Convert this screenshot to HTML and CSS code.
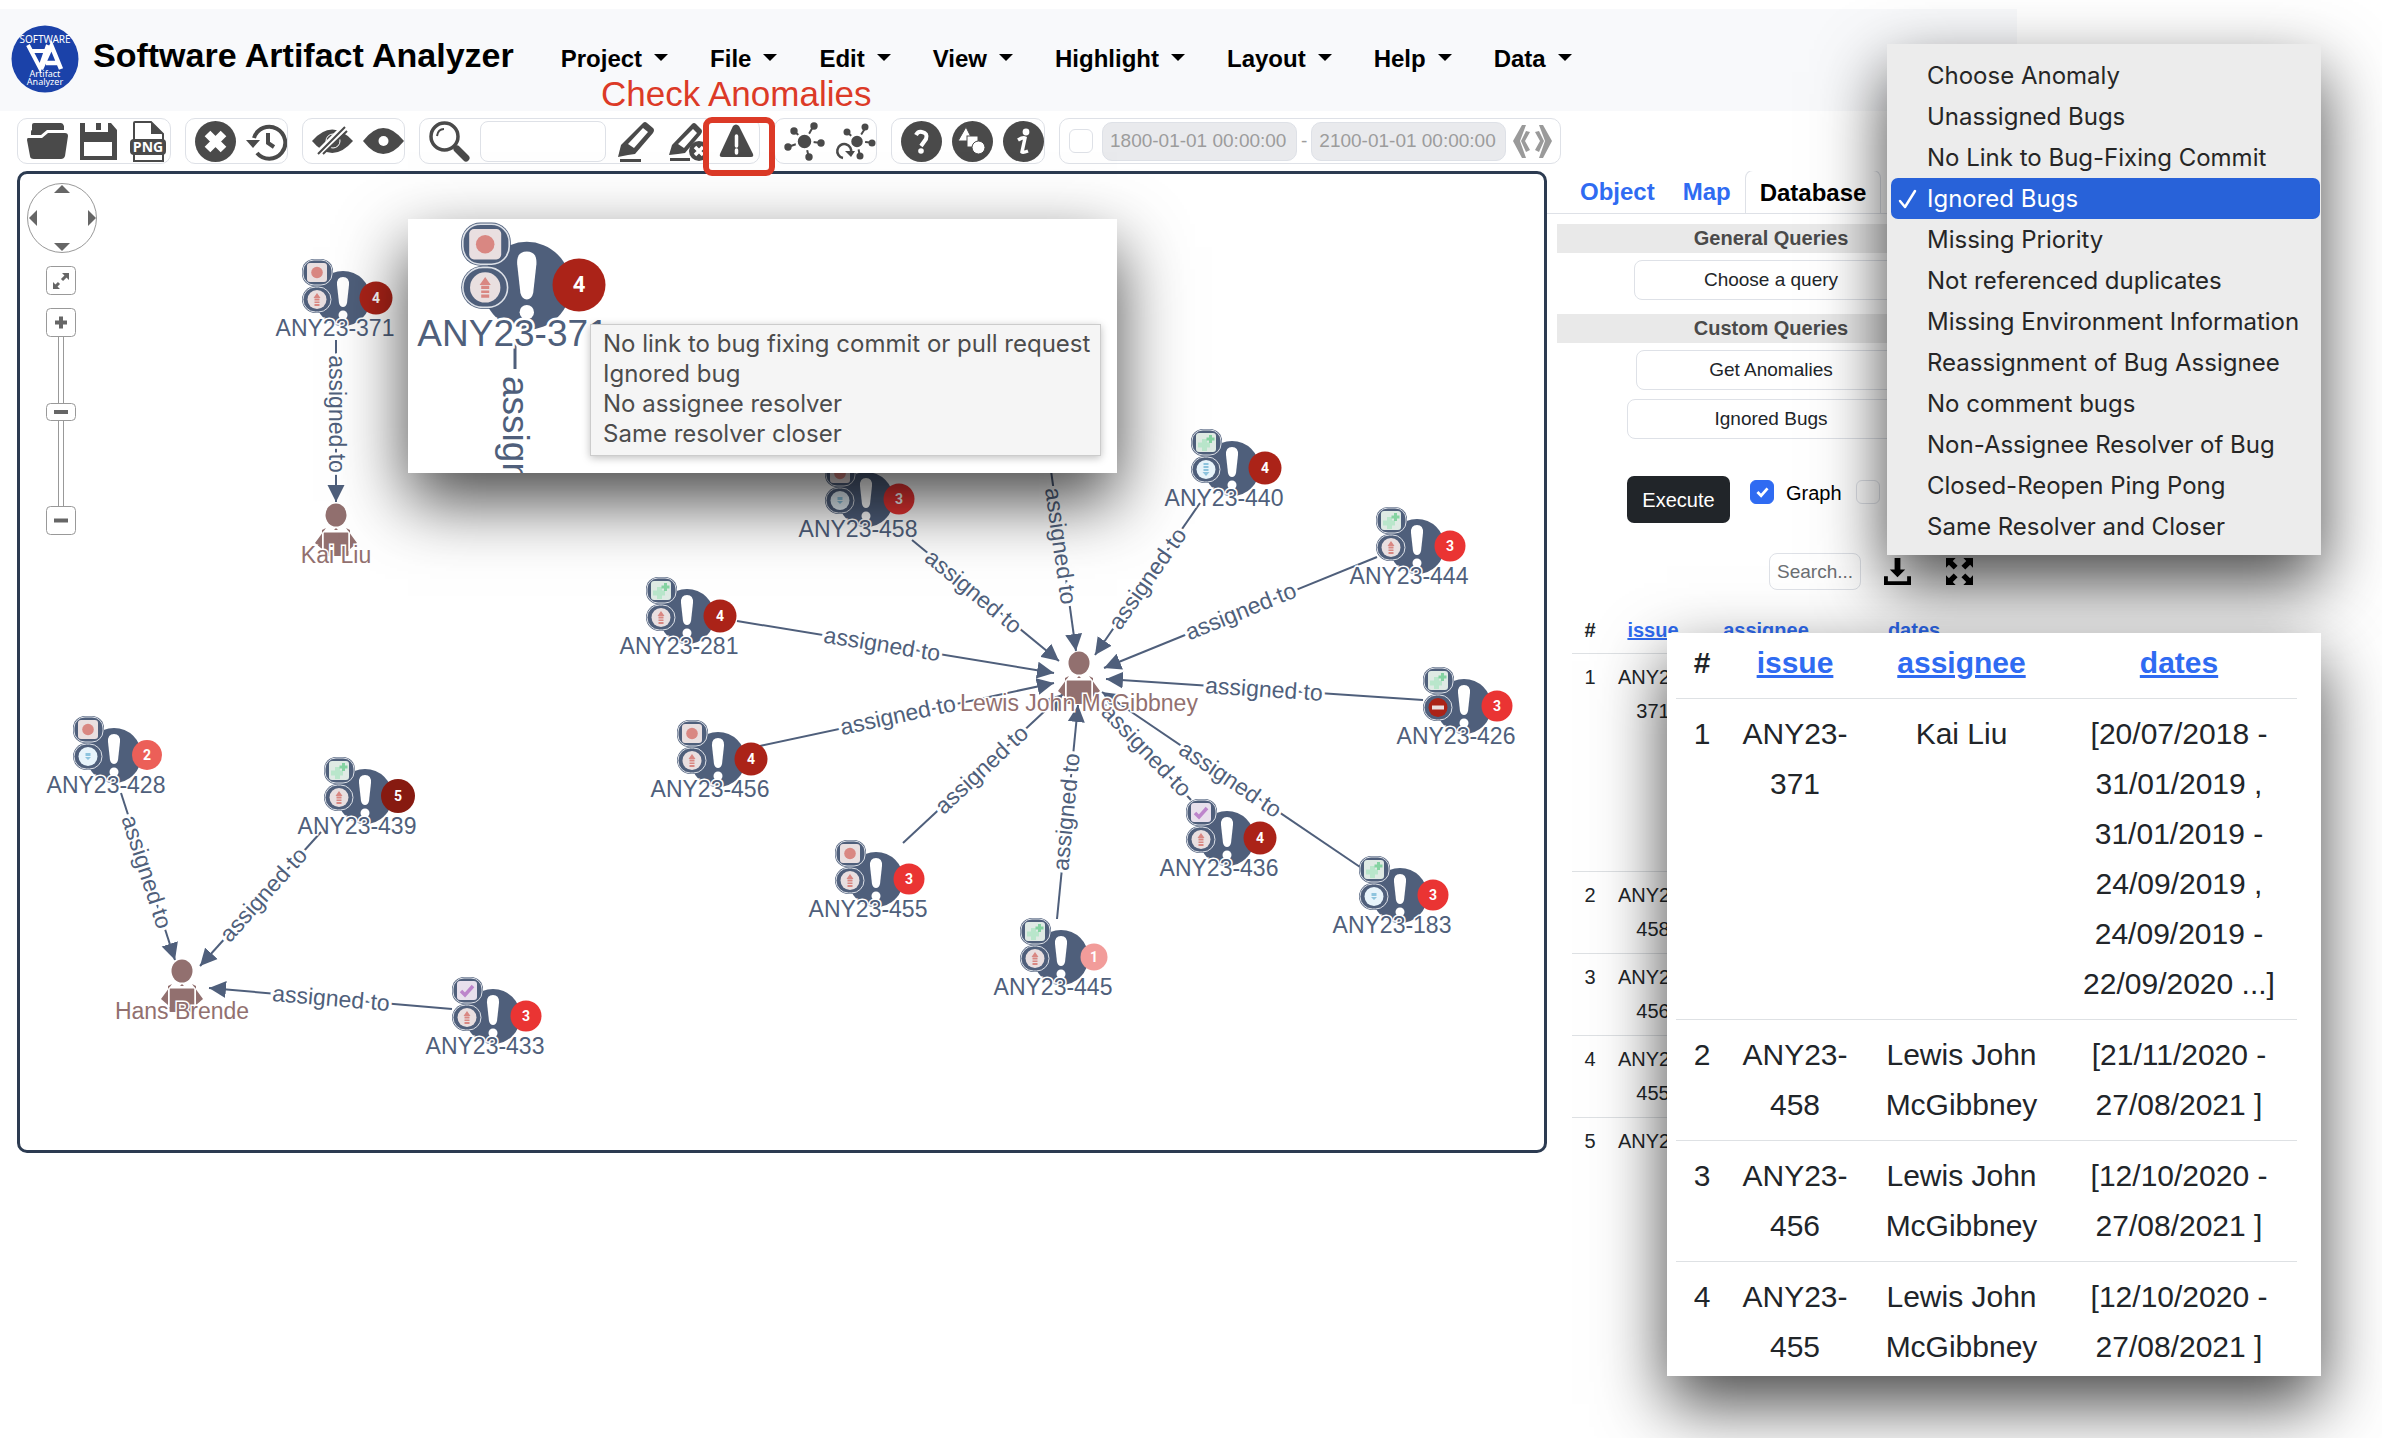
FILE: index.html
```html
<!DOCTYPE html>
<html lang="en">
<head>
<meta charset="utf-8">
<title>Software Artifact Analyzer</title>
<link rel="stylesheet" href="styles.css">
</head>
<body>
<div class="app">
  <header class="navbar">
    <svg class="logo" viewBox="0 0 68 68" aria-hidden="true">
      <circle cx="34" cy="34" r="33.500" fill="#1b42a9"/>
      <text x="34" y="18" font-size="10" text-anchor="middle" fill="#fff">SOFTWARE</text>
      <path d="M17 20L29 43L37 20M21 26H34" fill="none" stroke="#fff" stroke-width="4"/>
      <path d="M30 44L40.500 21L50 44M35 38H46" fill="none" stroke="#fff" stroke-width="4.500"/>
      <text x="34" y="52" font-size="9" text-anchor="middle" fill="#fff">Artifact</text>
      <text x="34" y="60" font-size="9" text-anchor="middle" fill="#fff">Analyzer</text>
    </svg>
    <h1 class="brand">Software Artifact Analyzer</h1>
    <nav class="menu">
      <button>Project</button><button>File</button><button>Edit</button><button>View</button><button>Highlight</button><button>Layout</button><button>Help</button><button>Data</button>
    </nav>
  </header>

  <div class="toolbar">
    <div class="group">
      <button aria-label="Open"><svg viewBox="0 0 41 41"><path d="M5 9V4Q5 2 7 2H34Q36 2 37 5V9H20L14 14H4V11Q4 9 5 9Z"/><path d="M1 17H15L21 12H38Q41 12 41 15L38 35Q37 38 34 38H7Q3 38 3 35L0 19Q0 17 1 17Z"/></svg></button>
      <button aria-label="Save"><svg viewBox="0 0 41 41"><path fill-rule="evenodd" d="M2 2H7V11H30V2H33L39 9V39H2ZM6 21V35H34V21Z"/><path d="M18 2H23V9H18Z"/></svg></button>
      <button aria-label="Save as PNG"><svg viewBox="0 0 41 41"><path d="M5 20V2Q5 1 6 1H22L34 13V20M5 32V40H34V32" fill="none" stroke="#4a4a4a" stroke-width="2"/><path d="M22 1L34 13H22Z"/><rect x="1" y="18" width="36" height="16" rx="4"/><text x="19" y="31" font-size="14" font-weight="700" text-anchor="middle" fill="#fff" class="png">PNG</text></svg></button>
    </div>
    <div class="group">
      <button aria-label="Clear"><svg viewBox="0 0 41 41"><circle cx="20.500" cy="20.500" r="20.500"/><path d="M12.500 12.500L28.500 28.500M28.500 12.500L12.500 28.500" stroke="#fff" stroke-width="8"/></svg></button>
      <button aria-label="History"><svg viewBox="0 0 41 41"><path d="M8 17A16 16 0 1 1 11 32" fill="none" stroke="#4a4a4a" stroke-width="4"/><path d="M0 19H14L7 27Z"/><path d="M22 12V22L28 26" fill="none" stroke="#4a4a4a" stroke-width="4"/></svg></button>
    </div>
    <div class="group">
      <button aria-label="Hide"><svg viewBox="0 0 41 41"><path d="M0 20Q20 -3 41 20Q20 44 0 20Z"/><circle cx="21" cy="20" r="7" fill="none" stroke="#fff"/><path d="M6 33L33 6" stroke="#fff" stroke-width="7"/><path d="M6 33L33 6M11 33L35 10" stroke="#4a4a4a" stroke-width="2"/></svg></button>
      <button aria-label="Show"><svg viewBox="0 0 41 41"><path d="M0 20Q20 -6 41 20Q20 46 0 20Z"/><circle cx="20.500" cy="20" r="5" fill="#fff"/></svg></button>
    </div>
    <div class="group">
      <button aria-label="Search"><svg viewBox="0 0 41 41"><circle cx="15.500" cy="15.500" r="13.500" fill="none" stroke="#4a4a4a" stroke-width="3.500"/><path d="M8 15Q9 8 15 8" fill="none" stroke="#4a4a4a" stroke-width="2"/><path d="M28 28L37 37" stroke="#4a4a4a" stroke-width="7" stroke-linecap="round"/></svg></button>
      <input class="find" type="text" aria-label="Search text">
      <button aria-label="Highlight"><svg viewBox="0 0 41 41"><path fill-rule="evenodd" d="M2 36L5 24L27 2Q29 0 31 2L37 7Q39 9 37 12L19 33L12 34ZM12 23L27 7L32 11L18 27Z"/><path d="M4 38H25V41H4Z"/></svg></button>
      <button aria-label="Remove highlights"><svg viewBox="0 0 41 41"><path fill-rule="evenodd" d="M2 34L5 24L25 3Q27 1 29 3L34 8Q36 10 34 13L18 32L11 33ZM11 23L26 8L30 12L17 27Z"/><path d="M3 37H23V40H3Z"/><circle cx="32" cy="30" r="10"/><path d="M28 26L36 34M36 26L28 34" stroke="#fff" stroke-width="3.500"/></svg></button>
      <div class="marked">
        <button aria-label="Check anomalies"><svg viewBox="0 0 41 41"><path d="M15 5Q18 2 21 5L35 33Q36 36 33 36H4Q1 36 2 33Z"/><path d="M18.500 15V25M18.500 29V32" stroke="#fff" stroke-width="3.500" stroke-linecap="round"/></svg></button>
        <span class="marker-box"></span>
        <span class="marker-text">Check Anomalies</span>
      </div>
    </div>
    <div class="group">
      <button aria-label="Layout"><svg viewBox="0 0 41 41"><path d="M21 20L10 10M21 20L30 4M21 20L37 22M21 20L4 26M21 20L25 37" stroke="#4a4a4a" stroke-width="2"/><circle cx="20.500" cy="20.500" r="8" stroke="#fff" stroke-width="2.500"/><circle cx="10" cy="10" r="3.700"/><circle cx="30" cy="5" r="3.700"/><circle cx="37" cy="22" r="3.700"/><circle cx="4" cy="26" r="3.700"/><circle cx="25" cy="36" r="3.700"/></svg></button>
      <button aria-label="Recalculate layout"><svg viewBox="0 0 41 41"><path d="M22 20L12 11M22 20L31 6M22 20L39 22M22 20L25 36" stroke="#4a4a4a" stroke-width="2"/><circle cx="22" cy="20.500" r="7" stroke="#fff" stroke-width="2.500"/><circle cx="12" cy="11" r="3.500"/><circle cx="30" cy="6" r="3.500"/><circle cx="37" cy="22" r="3.500"/><circle cx="25" cy="35" r="3.500"/><path d="M8 37A7 7 0 1 1 16 32" fill="none" stroke="#4a4a4a" stroke-width="2.500"/><path d="M10 30H20L16 36Z"/></svg></button>
    </div>
    <div class="group">
      <button aria-label="Help"><svg viewBox="0 0 41 41"><circle cx="20.500" cy="20.500" r="20.500"/><path d="M15 14Q17 10 21 11Q27 12 25 18L20 25" fill="none" stroke="#fff" stroke-width="4"/><circle cx="20" cy="30" r="2.800" fill="#fff"/></svg></button>
      <button aria-label="Legend"><svg viewBox="0 0 41 41"><circle cx="20.500" cy="20.500" r="20.500"/><g fill="#fff" stroke="#4a4a4a"><path d="M14 6L21 20H6Z"/><rect x="15" y="15" width="11" height="11"/><circle cx="26.500" cy="26.500" r="6.500"/></g></svg></button>
      <button aria-label="About"><svg viewBox="0 0 41 41"><circle cx="20.500" cy="20.500" r="20.500"/><circle cx="23" cy="11" r="3.400" fill="#fff"/><path d="M15 19Q20 16 22 17L19 31Q20 32 25 30" fill="none" stroke="#fff" stroke-width="3.500"/></svg></button>
    </div>
    <div class="group dates">
      <input type="checkbox" aria-label="Filter by time">
      <div class="range">
        <input type="text" disabled value="1800-01-01 00:00:00" aria-label="From">
        <span>-</span>
        <input type="text" disabled value="2100-01-01 00:00:00" aria-label="To">
      </div>
      <button aria-label="Step"><svg viewBox="0 0 41 41"><g fill="#9a9a9a"><path d="M10 4H14L8 20L14 37H10L1 20Z"/><path d="M14 10L18 11L13 20L18 29L14 31L9 20Z"/><path d="M31 4H27L33 20L27 37H31L40 20Z"/><path d="M27 10L23 11L28 20L23 29L27 31L32 20Z"/></g></svg></button>
    </div>
  </div>

  <main class="workspace">
    <section class="canvas">
      <svg class="graph" viewBox="20 174 1524 976" role="img" aria-label="Issue graph">
        <defs>
          <marker id="arrow" viewBox="0 0 18 18" refX="17" refY="9" markerWidth="18" markerHeight="18" markerUnits="userSpaceOnUse" orient="auto"><path d="M0 0.500L17 9L0 17.500Z" fill="#4f5f7b"/></marker>
          <g id="issue">
            <circle cx="8" cy="0.500" r="27.500" fill="#4f5f7b"/>
            <path d="M8 -21Q14.500 -21 14 -13L12 5Q11 9 8 9Q5 9 4 5L2 -13Q1.500 -21 8 -21Z" fill="#fff"/>
            <circle cx="8" cy="17" r="4.500" fill="#fff"/>
            <rect x="-33" y="-39" width="31" height="27" rx="12" fill="#4f5f7b"/>
            <rect x="-32" y="-38" width="29" height="25" rx="11" fill="none" stroke="#dde1e8" stroke-width="1"/>
            <rect x="-33" y="-12" width="30" height="27" rx="13.500" fill="#4f5f7b"/>
            <rect x="-32" y="-11" width="28" height="25" rx="12.500" fill="none" stroke="#dde1e8" stroke-width="1"/>
          </g>
          <g id="bug"><rect x="-28" y="-35" width="20" height="19" rx="3" fill="#e9dfe0"/><circle cx="-18" cy="-25.500" r="5.800" fill="#d98782"/></g>
          <g id="feature"><rect x="-28" y="-35" width="20" height="19" rx="3" fill="#dfeae4"/><path d="M-19.500 -29V-17M-26 -23H-14" stroke="#b9e6cb" stroke-width="5"/><path d="M-13.500 -33V-25M-17.500 -29H-9.500" stroke="#85d3a2" stroke-width="3"/></g>
          <g id="task"><rect x="-28" y="-35" width="20" height="19" rx="3" fill="#e8e0ec"/><path d="M-24 -25L-20 -21L-12 -30" fill="none" stroke="#bd85cb" stroke-width="3.500"/></g>
          <g id="major"><circle cx="-18" cy="1.500" r="9.500" fill="#e9dfe0"/><path d="M-21.500 0L-18 -5L-14.500 0ZM-20.500 0.500H-15.500V2.500H-20.500ZM-20.500 3.500H-15.500V5H-20.500ZM-20.500 6H-15.500V8H-20.500Z" fill="#d98782"/></g>
          <g id="minor"><circle cx="-18" cy="1.500" r="9.500" fill="#e8f4fb"/><path d="M-21 2H-15L-18 5ZM-20.500 -2H-15.500V1H-20.500Z" fill="#8ec4de"/></g>
          <g id="trivial"><circle cx="-18" cy="1.500" r="9.500" fill="#e8f4fb"/><path d="M-21.500 4H-14.500L-18 8ZM-20.500 -5H-15.500V-3H-20.500ZM-20.500 -2H-15.500V0H-20.500ZM-20.500 1H-15.500V3H-20.500Z" fill="#8ec4de"/></g>
          <g id="blocker"><circle cx="-18" cy="1.500" r="9.500" fill="#ab2318"/><rect x="-24" y="-0.500" width="12" height="4" fill="#e9dfe0"/></g>
          <g id="person" fill="#92706f">
            <ellipse cx="0" cy="0" rx="10.500" ry="11.500"/>
            <path d="M-10 13L-21 28L-14 34V15ZM10 13L21 28L14 34V15Z"/>
            <path d="M-2 15L0 13L2 15Z"/>
            <rect x="-12.500" y="17" width="25" height="24" rx="1"/>
            <path d="M-13 36V17H13V36" fill="none" stroke="#fff"/>
          </g>
        </defs>

        <g class="edges">
          <path d="M336 340V502"/>
          <path d="M912 540L1059 661"/>
          <path d="M1044 420L1076 651"/>
          <path d="M737 621L1054 673"/>
          <path d="M760 746L1054 683"/>
          <path d="M903 843L1063 694"/>
          <path d="M1057 919L1078 705"/>
          <path d="M1200 503L1095 655"/>
          <path d="M1377 557L1104 668"/>
          <path d="M1423 700L1106 679"/>
          <path d="M1360 867L1102 692"/>
          <path d="M1191 800L1102 703"/>
          <path d="M121 793L175 960"/>
          <path d="M321 832L200 966"/>
          <path d="M452 1009L209 988"/>
        </g>
        <g class="edge-labels">
          <text transform="translate(336 414) rotate(90)" dy="7">assigned to</text>
          <text transform="translate(973 592) rotate(39.500)" dy="7">assigned to</text>
          <text transform="translate(1060 546) rotate(82)" dy="7">assigned to</text>
          <text transform="translate(882 645) rotate(9.300)" dy="7">assigned to</text>
          <text transform="translate(898 716) rotate(-12.100)" dy="7">assigned to</text>
          <text transform="translate(982 770) rotate(-43)" dy="7">assigned to</text>
          <text transform="translate(1067 812) rotate(-84.400)" dy="7">assigned to</text>
          <text transform="translate(1148 579) rotate(-55)" dy="7">assigned to</text>
          <text transform="translate(1241 612) rotate(-22.100)" dy="7">assigned to</text>
          <text transform="translate(1264 690) rotate(3.800)" dy="7">assigned to</text>
          <text transform="translate(1230 780) rotate(34)" dy="7">assigned to</text>
          <text transform="translate(1146 751) rotate(46)" dy="7">assigned to</text>
          <text transform="translate(146 872) rotate(72)" dy="7">assigned to</text>
          <text transform="translate(264 895) rotate(-48)" dy="7">assigned to</text>
          <text transform="translate(331 999) rotate(4.900)" dy="7">assigned to</text>
        </g>

        <g class="nodes">
          <g transform="translate(335 298)"><use href="#issue"/><use href="#bug"/><use href="#major"/><circle class="n4" cx="41" r="16.500"/><text class="count" x="41" y="5">4</text><text class="label" y="38">ANY23-371</text></g>
          <g transform="translate(858 499)"><use href="#issue"/><use href="#bug"/><use href="#minor"/><circle class="n3" cx="41" r="15.500"/><text class="count" x="41" y="5">3</text><text class="label" y="38">ANY23-458</text></g>
          <g transform="translate(679 616)"><use href="#issue"/><use href="#feature"/><use href="#major"/><circle class="n4" cx="41" r="16.500"/><text class="count" x="41" y="5">4</text><text class="label" y="38">ANY23-281</text></g>
          <g transform="translate(710 759)"><use href="#issue"/><use href="#bug"/><use href="#major"/><circle class="n4" cx="41" r="16.500"/><text class="count" x="41" y="5">4</text><text class="label" y="38">ANY23-456</text></g>
          <g transform="translate(868 879)"><use href="#issue"/><use href="#bug"/><use href="#major"/><circle class="n3" cx="41" r="15.500"/><text class="count" x="41" y="5">3</text><text class="label" y="38">ANY23-455</text></g>
          <g transform="translate(1053 957)"><use href="#issue"/><use href="#feature"/><use href="#major"/><circle class="n1" cx="41" r="13.500"/><text class="count" x="41" y="5">1</text><text class="label" y="38">ANY23-445</text></g>
          <g transform="translate(1224 468)"><use href="#issue"/><use href="#feature"/><use href="#trivial"/><circle class="n4" cx="41" r="16.500"/><text class="count" x="41" y="5">4</text><text class="label" y="38">ANY23-440</text></g>
          <g transform="translate(1409 546)"><use href="#issue"/><use href="#feature"/><use href="#major"/><circle class="n3" cx="41" r="15.500"/><text class="count" x="41" y="5">3</text><text class="label" y="38">ANY23-444</text></g>
          <g transform="translate(1456 706)"><use href="#issue"/><use href="#feature"/><use href="#blocker"/><circle class="n3" cx="41" r="15.500"/><text class="count" x="41" y="5">3</text><text class="label" y="38">ANY23-426</text></g>
          <g transform="translate(1219 838)"><use href="#issue"/><use href="#task"/><use href="#major"/><circle class="n4" cx="41" r="16.500"/><text class="count" x="41" y="5">4</text><text class="label" y="38">ANY23-436</text></g>
          <g transform="translate(1392 895)"><use href="#issue"/><use href="#feature"/><use href="#minor"/><circle class="n3" cx="41" r="15.500"/><text class="count" x="41" y="5">3</text><text class="label" y="38">ANY23-183</text></g>
          <g transform="translate(106 755)"><use href="#issue"/><use href="#bug"/><use href="#minor"/><circle class="n2" cx="41" r="15"/><text class="count" x="41" y="5">2</text><text class="label" y="38">ANY23-428</text></g>
          <g transform="translate(357 796)"><use href="#issue"/><use href="#feature"/><use href="#major"/><circle class="n5" cx="41" r="17"/><text class="count" x="41" y="5">5</text><text class="label" y="38">ANY23-439</text></g>
          <g transform="translate(485 1016)"><use href="#issue"/><use href="#task"/><use href="#major"/><circle class="n3" cx="41" r="15.500"/><text class="count" x="41" y="5">3</text><text class="label" y="38">ANY23-433</text></g>
          <g transform="translate(336 515)"><use href="#person"/><text class="label who" y="48">Kai Liu</text></g>
          <g transform="translate(182 971)"><use href="#person"/><text class="label who" y="48">Hans Brende</text></g>
          <g transform="translate(1079 663)"><use href="#person"/><text class="label who" y="48">Lewis John McGibbney</text></g>
        </g>

        <g class="panzoom">
          <circle cx="62" cy="218" r="34.500"/>
          <path class="solid" d="M62 185L70 193H54ZM62 251L70 243H54ZM29 218L37 210V226ZM96 218L88 210V226Z"/>
          <rect x="46.500" y="266.500" width="29" height="28" rx="4"/>
          <path class="solid" d="M69 273V280L62 273ZM53 289V282L60 289Z"/><path class="thick" d="M67 275L62 280M55 287L59 283"/>
          <rect x="46.500" y="308.500" width="29" height="28" rx="4"/>
          <path class="bar" d="M55 322.500H67M61 316.500V328.500"/>
          <path d="M58.500 337V506M63.500 337V506"/>
          <rect x="46.500" y="403.500" width="29" height="17" rx="4"/>
          <path class="bar" d="M54 412H68"/>
          <rect x="46.500" y="506.500" width="29" height="28" rx="4"/>
          <path class="bar" d="M54 520.500H68"/>
        </g>
      </svg>
    </section>

    <aside class="panel">
      <div class="tabs"><a href="#object">Object</a><a href="#map">Map</a><a href="#database" class="active">Database</a></div>
      <div class="panel-body">
        <h2>General Queries</h2>
        <select class="query" aria-label="General query"><option>Choose a query</option></select>
        <h2>Custom Queries</h2>
        <select class="query custom" aria-label="Custom query"><option>Get Anomalies</option></select>
        <select class="query anomaly" aria-label="Anomaly"><option>Ignored Bugs</option></select>
        <div class="run">
          <button class="execute">Execute</button>
          <label><input type="checkbox" checked>Graph</label>
          <input type="checkbox" aria-label="Table">
        </div>
        <div class="result-tools">
          <input type="text" placeholder="Search..." aria-label="Search results">
          <button aria-label="Download"><svg viewBox="0 0 28 28"><path d="M11 0H17V12H22L14 20L6 12H11Z"/><path d="M2 19V26H26V19" fill="none" stroke="#000" stroke-width="4"/></svg></button>
          <button aria-label="Expand"><svg viewBox="0 0 28 28"><path d="M0 0H10L7 3L12 8L8 12L3 7L0 10ZM28 0V10L25 7L20 12L16 8L21 3L18 0ZM0 28V18L3 21L8 16L12 20L7 25L10 28ZM28 28H18L21 25L16 20L20 16L25 21L28 18Z"/></svg></button>
        </div>
        <table class="results">
          <colgroup><col class="c1"><col class="c2"><col class="c3"><col class="c4"></colgroup>
          <thead><tr><th>#</th><th><a href="#issue">issue</a></th><th><a href="#assignee">assignee</a></th><th><a href="#dates">dates</a></th></tr></thead>
          <tbody>
            <tr class="tall"><td>1</td><td>ANY23-<br>371</td><td></td><td></td></tr>
            <tr><td>2</td><td>ANY23-<br>458</td><td></td><td></td></tr>
            <tr><td>3</td><td>ANY23-<br>456</td><td></td><td></td></tr>
            <tr><td>4</td><td>ANY23-<br>455</td><td></td><td></td></tr>
            <tr><td>5</td><td>ANY23-</td><td></td><td></td></tr>
          </tbody>
        </table>
      </div>
    </aside>
  </main>
</div>

<div class="float closeup">
  <svg viewBox="408 219 709 254" aria-hidden="true">
    <path d="M515 340V369" stroke="#4f5f7b" stroke-width="3"/>
    <text class="zoomed" transform="translate(514 376) rotate(90)" dy="11">assigned to</text>
    <g transform="translate(514 285) scale(1.6)"><use href="#issue"/><use href="#bug"/><use href="#major"/></g>
    <circle class="n4" cx="579" cy="285" r="26.500"/>
    <text class="count zoomed-count" x="579" y="292">4</text>
    <text class="zoomed mid" x="513" y="346">ANY23-371</text>
  </svg>
  <ul class="tooltip"><li>No link to bug fixing commit or pull request</li><li>Ignored bug</li><li>No assignee resolver</li><li>Same resolver closer</li></ul>
</div>

<ul class="float options" role="listbox" aria-label="Anomaly">
  <li role="option">Choose Anomaly</li>
  <li role="option">Unassigned Bugs</li>
  <li role="option">No Link to Bug-Fixing Commit</li>
  <li role="option" aria-selected="true"><svg viewBox="0 0 20 22" aria-hidden="true"><path d="M2 13L7 19L17 3" fill="none" stroke="#fff" stroke-width="2.500" stroke-linecap="round" stroke-linejoin="round"/></svg>Ignored Bugs</li>
  <li role="option">Missing Priority</li>
  <li role="option">Not referenced duplicates</li>
  <li role="option">Missing Environment Information</li>
  <li role="option">Reassignment of Bug Assignee</li>
  <li role="option">No comment bugs</li>
  <li role="option">Non-Assignee Resolver of Bug</li>
  <li role="option">Closed-Reopen Ping Pong</li>
  <li role="option">Same Resolver and Closer</li>
</ul>

<div class="float detail">
  <table>
    <colgroup><col class="d1"><col class="d2"><col class="d3"><col class="d4"></colgroup>
    <thead><tr><th>#</th><th><a href="#issue">issue</a></th><th><a href="#assignee">assignee</a></th><th><a href="#dates">dates</a></th></tr></thead>
    <tbody>
      <tr><td>1</td><td>ANY23-<br>371</td><td>Kai Liu</td><td>[20/07/2018 -<br>31/01/2019 ,<br>31/01/2019 -<br>24/09/2019 ,<br>24/09/2019 -<br>22/09/2020 ...]</td></tr>
      <tr><td>2</td><td>ANY23-<br>458</td><td>Lewis John<br>McGibbney</td><td>[21/11/2020 -<br>27/08/2021 ]</td></tr>
      <tr><td>3</td><td>ANY23-<br>456</td><td>Lewis John<br>McGibbney</td><td>[12/10/2020 -<br>27/08/2021 ]</td></tr>
      <tr><td>4</td><td>ANY23-<br>455</td><td>Lewis John<br>McGibbney</td><td>[12/10/2020 -<br>27/08/2021 ]</td></tr>
    </tbody>
  </table>
</div>
</body>
</html>
```
FILE: styles.css
```css
* { box-sizing: border-box; }
body {
  margin: 0;
  background: #fff;
  color: #212529;
  font: 20px/30px "Liberation Sans", Arial, sans-serif;
}
button, input, select { font: inherit; color: inherit; margin: 0; }
button { border: 0; padding: 0; background: none; cursor: pointer; }
ul { list-style: none; margin: 0; padding: 0; }
a { color: #2f6bf2; }

.app { margin-right: 365px; padding-top: 9px; }

/* Header */
.navbar {
  display: flex;
  align-items: center;
  height: 102px;
  padding: 0 0 2px 11px;
  background: #f8f9fb;
}
.logo { width: 68px; height: 68px; font-family: "Noto Sans", sans-serif; }
.brand { margin: 0 0 8px 14px; font-size: 34px; line-height: 40px; color: #000; white-space: nowrap; }
.menu { display: flex; gap: 42px; margin-left: 47px; }
.menu button { display: flex; align-items: center; gap: 12px; font-size: 24px; font-weight: 700; color: #000; }
.menu button::after {
  content: "";
  margin-bottom: 4px;
  border: 7px solid transparent;
  border-top-color: #000;
  border-bottom: 0;
}

/* Toolbar */
.toolbar { display: flex; gap: 14px; padding: 7px 0 7px 17px; }
.group {
  display: flex;
  align-items: center;
  gap: 10px;
  height: 46px;
  padding-left: 9px;
  border: 1px solid #dee1e7;
  border-radius: 10px;
}
.group button { display: block; width: 41px; height: 41px; }
.group svg { display: block; width: 41px; height: 41px; fill: #4a4a4a; }
.png { font-family: "Open Sans", sans-serif; }
.find { width: 126px; height: 41px; border: 1px solid #dee1e7; border-radius: 8px; }
.marked { position: relative; }
.marker-box {
  position: absolute;
  left: -15px;
  top: -4px;
  width: 72px;
  height: 59px;
  border: 6px solid #dc3a27;
  border-radius: 9px;
}
.marker-text {
  position: absolute;
  left: -117px;
  top: -47px;
  font-size: 35px;
  line-height: 40px;
  color: #dc3a27;
  white-space: nowrap;
}
.dates { gap: 8px; color: #9c9c9c; font-size: 19px; }
.dates > input { margin-right: 1px; }
.range { display: flex; align-items: center; gap: 4px; }
.range input {
  width: 195px;
  height: 39px;
  padding: 0 7px;
  border: 1px solid #dee1e7;
  border-radius: 10px;
  background: #e9eaed;
  color: #9c9c9c;
}
.dates button { margin: 0 7px 0 -2px; }

input[type="checkbox"] {
  appearance: none;
  width: 24px;
  height: 24px;
  border: 1px solid #dee1e7;
  border-radius: 6px;
  background: #fff;
}
input[type="checkbox"]:checked {
  border-color: #2f6bf2;
  background: #2f6bf2 url("data:image/svg+xml,%3Csvg xmlns='http://www.w3.org/2000/svg' viewBox='0 0 24 24'%3E%3Cpath d='M7 12l4 4 7-8' fill='none' stroke='%23fff' stroke-width='3'/%3E%3C/svg%3E");
}

/* Workspace */
.workspace { display: flex; align-items: stretch; padding-left: 17px; }
.canvas { flex: 1; border: 3px solid #2c3b51; border-radius: 10px; }
.graph { display: block; width: 100%; height: auto; font-size: 23px; }
.edges path { fill: none; stroke: #4f5f7b; stroke-width: 2; marker-end: url(#arrow); }
.edge-labels text { text-anchor: middle; fill: #4f5f7b; stroke: #fff; stroke-width: 6px; paint-order: stroke; }
.label { text-anchor: middle; fill: #4f5f7b; stroke: #fff; stroke-width: 3px; paint-order: stroke; }
.who { fill: #92706f; }
.count { text-anchor: middle; font: 700 14px Roboto, sans-serif; fill: #fff; }
.n1 { fill: #f29c9a; }
.n2 { fill: #ec5f58; }
.n3 { fill: #ea3433; }
.n4 { fill: #ab2318; }
.n5 { fill: #871a10; }
.panzoom > * { fill: #fff; stroke: #999; }
.panzoom .solid { fill: #666; stroke: none; }
.panzoom .thick { stroke: #666; stroke-width: 3; }
.panzoom .bar { stroke: #666; stroke-width: 4; }

/* Side panel */
.panel { width: 470px; height: 982px; overflow: hidden; }
.tabs { display: flex; align-items: flex-end; height: 43px; padding-left: 19px; border-bottom: 1px solid #dee1e7; }
.tabs a { height: 43px; padding: 0 14px; font-size: 24px; line-height: 44px; font-weight: 700; text-decoration: none; }
.tabs .active {
  color: #000;
  background: #fff;
  border: 1px solid #dee1e7;
  border-bottom: 0;
  border-radius: 8px 8px 0 0;
}
.panel-body { display: flex; flex-direction: column; align-items: center; padding: 10px 32px 0 10px; }
.panel h2 { width: 100%; margin: 0 0 7px; background: #e9e9e9; color: #4a4a4a; font-size: 20px; line-height: 29px; text-align: center; }
.query {
  appearance: none;
  width: 275px;
  height: 40px;
  margin-bottom: 14px;
  border: 1px solid #dee1e7;
  border-radius: 8px;
  background: #fff;
  font-size: 19px;
  text-align: center;
  text-align-last: center;
}
.custom { width: 270px; margin-bottom: 9px; }
.anomaly { width: 288px; margin-bottom: 37px; }
.run { display: flex; align-items: flex-start; gap: 14px; width: 288px; color: #000; }
.run input { margin-top: 4px; flex: none; }
.run label { display: flex; gap: 12px; line-height: 34px; margin-left: 6px; }
.execute { flex: none; width: 103px; height: 47px; border-radius: 7px; background: #212529; color: #fff; }
.result-tools { display: flex; align-items: center; gap: 23px; margin: 30px 0 30px 200px; }
.result-tools input { width: 92px; height: 37px; padding: 0 7px; border: 1px solid #dee1e7; border-radius: 8px; font-size: 19px; }
.result-tools input::placeholder { color: #6c6f73; opacity: 1; }
.result-tools svg { display: block; width: 27px; height: 27px; }
.result-tools button + button { margin-left: 12px; }

table { border-collapse: collapse; table-layout: fixed; }
th, td { padding: 0; text-align: center; vertical-align: top; border-bottom: 1px solid #dee1e4; }
.results { align-self: flex-start; width: 422px; margin-left: 15px; line-height: 34px; }
.results th { padding: 0 0 13px; line-height: 20px; }
.results td { padding: 6px 0 7px; }
.results tr:last-child td { border-bottom: 0; }
.results .tall { height: 218px; }
.c1 { width: 36px; }
.c2 { width: 90px; }
.c3 { width: 136px; }
.c4 { width: 160px; }

/* Floating pieces over the workspace */
.float { position: absolute; box-shadow: 0 28px 64px rgba(0, 0, 0, 0.72); }
.closeup { left: 408px; top: 219px; width: 709px; height: 254px; background: #fff; }
.closeup svg { display: block; width: 709px; height: 254px; }
.zoomed { font-size: 37px; fill: #4f5f7b; stroke: #fff; stroke-width: 5px; paint-order: stroke; }
.mid { text-anchor: middle; }
.zoomed-count { font-size: 22px; }
.tooltip {
  position: absolute;
  left: 182px;
  top: 105px;
  width: 511px;
  padding: 4px 12px 6px;
  border: 1px solid #ccc;
  background: #f5f5f5;
  box-shadow: 0 2px 8px rgba(0, 0, 0, 0.25);
  color: #4c4c4c;
  font: 24px/30px Inter, sans-serif;
  white-space: nowrap;
}
.options {
  left: 1887px;
  top: 44px;
  width: 434px;
  padding: 11px 1px 8px 4px;
  background: #ececec;
  color: #262626;
  font: 24px/41px Inter, sans-serif;
}
.options li { position: relative; padding-left: 36px; border-radius: 7px; white-space: nowrap; }
.options li[aria-selected] { background: #2862d9; color: #fff; }
.options svg { position: absolute; left: 7px; top: 10px; width: 20px; height: 22px; }
.detail { left: 1667px; top: 633px; width: 654px; height: 743px; padding: 5px 24px 0 9px; background: #fff; overflow: hidden; }
.detail table { width: 621px; font-size: 30px; line-height: 50px; }
.detail th { padding-bottom: 10px; }
.detail td { padding: 10px 0; }
.detail tr:last-child td { border-bottom: 0; }
.d1 { width: 52px; }
.d2 { width: 134px; }
.d3 { width: 199px; }
.d4 { width: 236px; }
```
